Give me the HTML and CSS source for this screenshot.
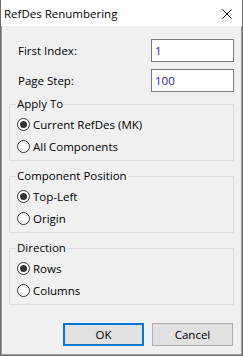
FILE: index.html
```html
<!DOCTYPE html>
<html lang="en">
  <head>
    <meta charset="UTF-8" />
    <title>RefDes Renumbering</title>
    <link rel="stylesheet" href="styles.css">
  </head>
  <body>
    <div class="dialog">
      <div class="titlebar">
        <span class="title">RefDes Renumbering</span>
        <svg class="close" width="10" height="10" viewBox="0 0 10 10">
          <path d="M0.5 0.5 L9.5 9.5 M9.5 0.5 L0.5 9.5" stroke="#000" stroke-width="1" fill="none" />
        </svg>
      </div>
      <div class="content">
        <div class="field">
          <label for="firstIndex">First Index:</label>
          <input type="text" id="firstIndex" value="1" />
        </div>
        <div class="field">
          <label for="pageStep">Page Step:</label>
          <input type="text" id="pageStep" value="100" />
        </div>

        <fieldset class="group">
          <legend>Apply To</legend>
          <label class="radio"><span class="dot checked"></span>Current RefDes (MK)</label>
          <label class="radio"><span class="dot"></span>All Components</label>
        </fieldset>

        <fieldset class="group">
          <legend>Component Position</legend>
          <label class="radio"><span class="dot checked"></span>Top-Left</label>
          <label class="radio"><span class="dot"></span>Origin</label>
        </fieldset>

        <fieldset class="group">
          <legend>Direction</legend>
          <label class="radio"><span class="dot checked"></span>Rows</label>
          <label class="radio"><span class="dot"></span>Columns</label>
        </fieldset>

        <div class="buttons">
          <button class="btn default">OK</button>
          <button class="btn">Cancel</button>
        </div>
      </div>
    </div>
  </body>
</html>
```

FILE: styles.css
```css
html,
body {
  margin: 0;
  padding: 0;
}
body {
  font-family: "Open Sans", "Liberation Sans", sans-serif;
  font-size: 11.5px;
  color: #000;
  background-color: #fff;
}
.dialog {
  width: 243px;
  height: 356px;
  box-sizing: border-box;
  border: 1px solid #6e6e6e;
  border-top: none;
  display: flex;
  flex-direction: column;
}
.titlebar {
  height: 26px;
  display: flex;
  align-items: center;
  justify-content: space-between;
  padding: 0 10px 0 3px;
  background-color: #fff;
}
.title {
  line-height: 16px;
  padding-top: 1px;
}
.close {
  display: block;
  margin-top: 1px;
}
.content {
  flex: 1;
  background-color: #f0f0f0;
  border: 1px solid #9a9a9a;
  border-top: none;
  padding: 13px 7px 8px 7px;
  display: flex;
  flex-direction: column;
}
.field {
  display: flex;
  align-items: center;
  justify-content: space-between;
  padding-left: 9px;
  margin-bottom: 7px;
}
.field:nth-child(2) {
  margin-bottom: 4px;
}
.field input {
  width: 83px;
  height: 23px;
  box-sizing: border-box;
  border: 1px solid #7a7a7a;
  background-color: #fff;
  padding: 0 3px;
  margin: 0;
  font-family: inherit;
  font-size: 11.5px;
  color: #1c1cb0;
  outline: none;
}
.group {
  margin: 0 0 7px 0;
  padding: 1px 0 3px 7px;
  border: 1px solid #dcdcdc;
  min-width: 0;
}
.group legend {
  padding: 0 1px;
  margin-left: -1px;
  line-height: 16px;
}
.radio {
  display: flex;
  align-items: center;
  height: 22px;
}
.dot {
  width: 13px;
  height: 13px;
  box-sizing: border-box;
  border: 1px solid #333;
  border-radius: 50%;
  background-color: #fff;
  margin-right: 3px;
  display: flex;
  align-items: center;
  justify-content: center;
}
.dot.checked::after {
  content: "";
  width: 7px;
  height: 7px;
  border-radius: 50%;
  background-color: #333;
}
.buttons {
  display: flex;
  justify-content: flex-end;
  gap: 8px;
  margin-top: 11px;
  padding-right: 1px;
}
.btn {
  width: 81px;
  height: 23px;
  box-sizing: border-box;
  background-color: #e1e1e1;
  border: 1px solid #adadad;
  font-family: inherit;
  font-size: 11.5px;
  color: #000;
  padding: 0;
}
.btn.default {
  border: 2px solid #0078d7;
}
```
